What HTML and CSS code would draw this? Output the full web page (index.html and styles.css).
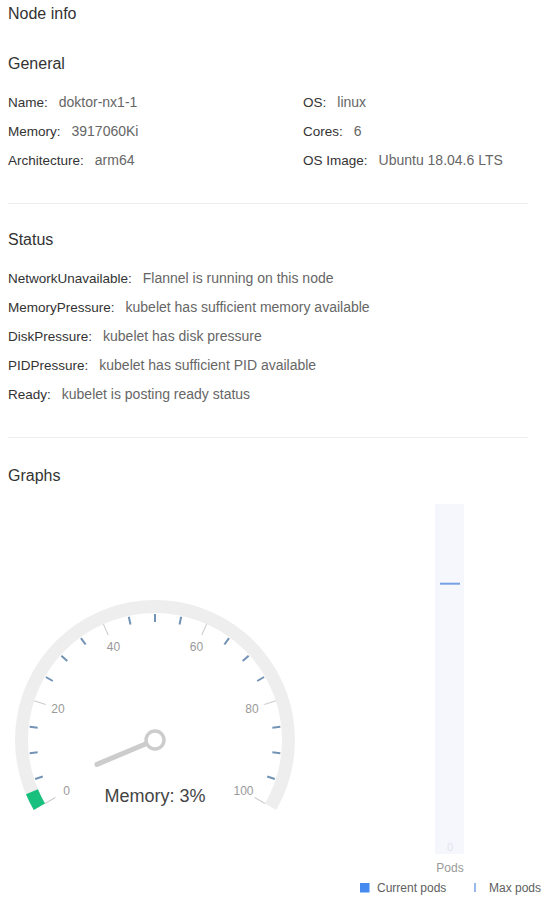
FILE: index.html
```html
<!DOCTYPE html>
<html lang="en">
<head>
    <meta charset="UTF-8">
    <meta name="viewport" content="width=device-width, initial-scale=1.0">
    <title>Node info</title>
    <link rel="stylesheet" href="styles.css">
</head>
<body>
    <div class="page">
        <h1 class="title">Node info</h1>

        <section class="section">
            <h2>General</h2>
            <div class="info-grid">
                <div class="row"><span class="label">Name:</span><span class="value">doktor-nx1-1</span></div>
                <div class="row"><span class="label">OS:</span><span class="value">linux</span></div>
                <div class="row"><span class="label">Memory:</span><span class="value">3917060Ki</span></div>
                <div class="row"><span class="label">Cores:</span><span class="value">6</span></div>
                <div class="row"><span class="label">Architecture:</span><span class="value">arm64</span></div>
                <div class="row"><span class="label">OS Image:</span><span class="value">Ubuntu 18.04.6 LTS</span></div>
            </div>
        </section>

        <section class="section">
            <h2>Status</h2>
            <div class="row"><span class="label">NetworkUnavailable:</span><span class="value">Flannel is running on this node</span></div>
            <div class="row"><span class="label">MemoryPressure:</span><span class="value">kubelet has sufficient memory available</span></div>
            <div class="row"><span class="label">DiskPressure:</span><span class="value">kubelet has disk pressure</span></div>
            <div class="row"><span class="label">PIDPressure:</span><span class="value">kubelet has sufficient PID available</span></div>
            <div class="row"><span class="label">Ready:</span><span class="value">kubelet is posting ready status</span></div>
        </section>

        <section class="section graphs">
            <h2>Graphs</h2>
            <div class="charts">
                <!-- memory gauge, drawn in page coordinates -->
                <svg class="gauge" viewBox="8 485 300 418" width="300" height="418">
                    <path class="band" d="M 33.76 809 A 140 140 0 1 1 276.24 809 L 264.98 802.5 A 127 127 0 1 0 45.02 802.5 Z"/>
                    <path class="fill" d="M 33.76 809 A 140 140 0 0 1 25.93 793.25 L 37.92 788.21 A 127 127 0 0 0 45.02 802.5 Z"/>

                    <g class="minor">
                        <line x1="155" y1="613" x2="155" y2="621" transform="rotate(-108 155 739)"/>
                        <line x1="155" y1="613" x2="155" y2="621" transform="rotate(-96 155 739)"/>
                        <line x1="155" y1="613" x2="155" y2="621" transform="rotate(-84 155 739)"/>
                        <line x1="155" y1="613" x2="155" y2="621" transform="rotate(-60 155 739)"/>
                        <line x1="155" y1="613" x2="155" y2="621" transform="rotate(-48 155 739)"/>
                        <line x1="155" y1="613" x2="155" y2="621" transform="rotate(-36 155 739)"/>
                        <line x1="155" y1="613" x2="155" y2="621" transform="rotate(-12 155 739)"/>
                        <line x1="155" y1="613" x2="155" y2="621"/>
                        <line x1="155" y1="613" x2="155" y2="621" transform="rotate(12 155 739)"/>
                        <line x1="155" y1="613" x2="155" y2="621" transform="rotate(36 155 739)"/>
                        <line x1="155" y1="613" x2="155" y2="621" transform="rotate(48 155 739)"/>
                        <line x1="155" y1="613" x2="155" y2="621" transform="rotate(60 155 739)"/>
                        <line x1="155" y1="613" x2="155" y2="621" transform="rotate(84 155 739)"/>
                        <line x1="155" y1="613" x2="155" y2="621" transform="rotate(96 155 739)"/>
                        <line x1="155" y1="613" x2="155" y2="621" transform="rotate(108 155 739)"/>
                    </g>
                    <g class="major">
                        <line x1="155" y1="612" x2="155" y2="624" transform="rotate(-120 155 739)"/>
                        <line x1="155" y1="612" x2="155" y2="624" transform="rotate(-72 155 739)"/>
                        <line x1="155" y1="612" x2="155" y2="624" transform="rotate(-24 155 739)"/>
                        <line x1="155" y1="612" x2="155" y2="624" transform="rotate(24 155 739)"/>
                        <line x1="155" y1="612" x2="155" y2="624" transform="rotate(72 155 739)"/>
                        <line x1="155" y1="612" x2="155" y2="624" transform="rotate(120 155 739)"/>
                    </g>
                    <g class="tick-label">
                        <text x="66.7" y="794">0</text>
                        <text x="58" y="711.5">20</text>
                        <text x="113.5" y="650">40</text>
                        <text x="196.5" y="650">60</text>
                        <text x="252" y="711.5">80</text>
                        <text x="243.5" y="794">100</text>
                    </g>

                    <line class="needle" x1="155" y1="739" x2="155" y2="676" transform="rotate(-112.8 155 739)"/>
                    <circle class="hub" cx="155" cy="739" r="9"/>
                    <text class="gauge-value" x="155" y="800.5">Memory: 3%</text>
                </svg>

                <!-- pods column chart -->
                <svg class="pods" viewBox="308 485 234 418" width="234" height="418">
                    <rect class="plot-band" x="435" y="503" width="29" height="350"/>
                    <line class="max-line" x1="440" y1="582.7" x2="460" y2="582.7"/>
                    <text class="data-label" x="450" y="850">0</text>
                    <text class="axis-label" x="450" y="871">Pods</text>

                    <rect class="legend-box" x="360" y="882" width="9.5" height="9.5"/>
                    <text class="legend-text" x="377" y="890.5">Current pods</text>
                    <line class="legend-line" x1="475" y1="882" x2="475" y2="891"/>
                    <text class="legend-text" x="489" y="890.5">Max pods</text>
                </svg>
            </div>
        </section>
    </div>
</body>
</html>
```

FILE: styles.css
```css
body {
    margin: 0;
    background: #fff;
    font-family: "Liberation Sans", Arial, sans-serif;
    color: #333;
}

.page {
    padding: 4px 22px 0 8px;
}

.title {
    margin: 0 0 4px;
    font-size: 16px;
    line-height: 20px;
    font-weight: normal;
    color: #333;
}

.section {
    padding: 26px 0 28px;
    border-bottom: 1px solid #eee;
}

.section h2 {
    margin: 0 0 14px;
    font-size: 16px;
    line-height: 20px;
    font-weight: normal;
    color: #333;
}

.info-grid {
    display: grid;
    grid-template-columns: 295px 1fr;
}

.row {
    font-size: 13.5px;
    line-height: 29px;
    white-space: nowrap;
}

.label {
    color: #333;
}

.value {
    color: #666;
    font-size: 14px;
    margin-left: 11px;
}

.graphs {
    border-bottom: none;
    padding: 28px 0 0;
}

.graphs h2 {
    margin-bottom: 0;
}

.charts {
    display: flex;
    margin-right: -14px;
}

.charts svg {
    display: block;
    flex: none;
    font-family: "Liberation Sans", Arial, sans-serif;
}

/* gauge */
.band {
    fill: #eee;
}

.fill {
    fill: #19bf7d;
}

.minor line {
    stroke: #7293b5;
    stroke-width: 2;
}

.major line {
    stroke: #ccc;
    stroke-width: 1;
}

.tick-label text {
    font-size: 12px;
    fill: #999;
    text-anchor: middle;
}

.needle {
    stroke: #ccc;
    stroke-width: 5;
    stroke-linecap: round;
}

.hub {
    fill: #fff;
    stroke: #ccc;
    stroke-width: 3.5;
}

.gauge-value {
    font-size: 18px;
    fill: #444;
    text-anchor: middle;
}

/* pods chart */
.plot-band {
    fill: #f5f7fc;
}

.max-line {
    stroke: #77a1e2;
    stroke-width: 2;
}

.data-label {
    font-size: 11px;
    fill: #e2e5ee;
    text-anchor: middle;
}

.axis-label {
    font-size: 12px;
    fill: #999;
    text-anchor: middle;
}

.legend-box {
    fill: #448aef;
}

.legend-line {
    stroke: #77a1e2;
    stroke-width: 1.5;
}

.legend-text {
    font-size: 12px;
    fill: #606060;
}
```
